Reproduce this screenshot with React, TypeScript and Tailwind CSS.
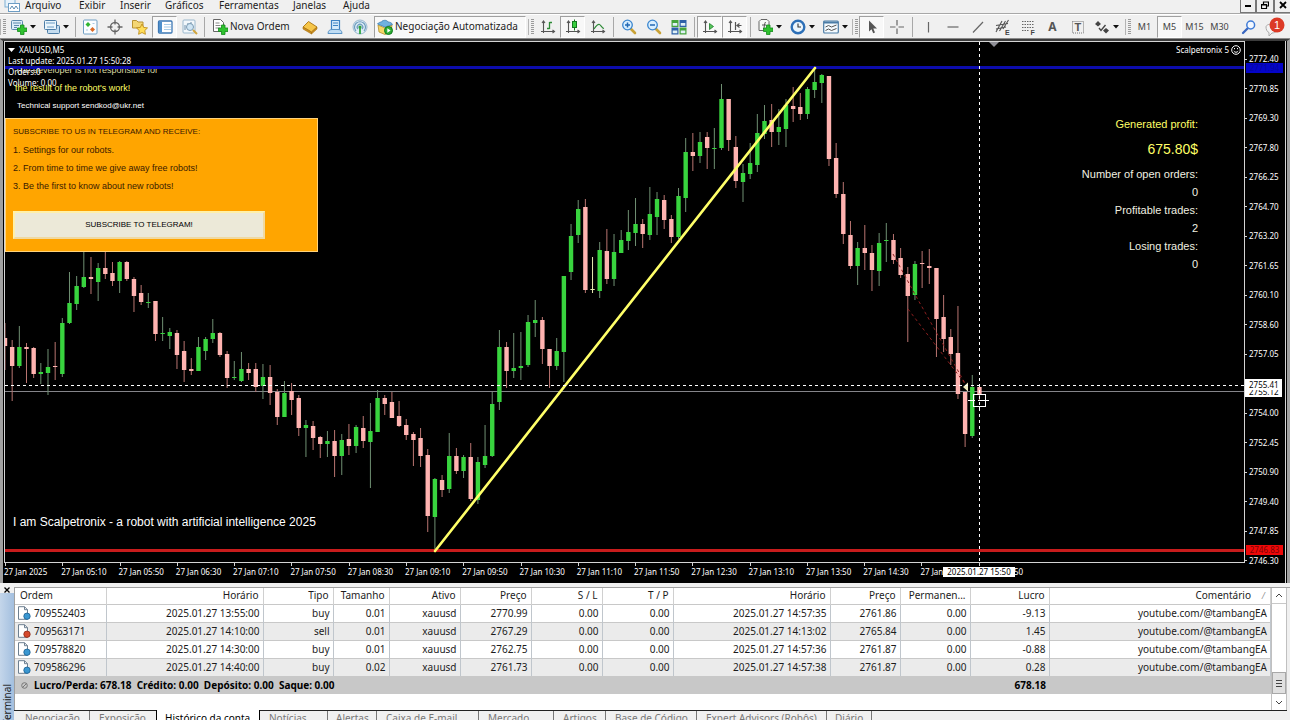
import type { ReactNode } from "react";

type Candle = [high: number, top: number, bottom: number, low: number, kind: string];

const STEP = 7.165;

const CANDLES: Candle[] = [
  [323, 338, 346, 370, "d"], [340, 347, 366, 401, "d"], [326, 347, 366, 368, "u"], [343, 347, 349, 383, "d"],
  [347, 348, 374, 378, "d"], [363, 372, 374, 384, "u"], [349, 367, 373, 395, "u"], [342, 366, 367, 380, "d"],
  [318, 323, 374, 377, "u"], [272, 303, 323, 324, "u"], [276, 286, 304, 310, "u"], [252, 277, 287, 288, "u"],
  [257, 277, 279, 294, "d"], [263, 268, 282, 301, "u"], [252, 268, 274, 279, "d"], [262, 273, 281, 286, "d"],
  [261, 262, 281, 293, "u"], [261, 262, 279, 281, "d"], [277, 279, 296, 312, "d"], [285, 293, 302, 305, "d"],
  [293, 302, 303, 308, "u"], [301, 301, 334, 341, "d"], [317, 333, 334, 341, "u"], [328, 332, 336, 349, "u"],
  [330, 333, 355, 369, "d"], [341, 351, 370, 382, "d"], [358, 369, 371, 375, "d"], [337, 347, 371, 371, "u"],
  [337, 339, 351, 360, "u"], [319, 333, 339, 343, "u"], [332, 333, 355, 357, "d"], [351, 354, 378, 388, "d"],
  [361, 377, 378, 380, "u"], [352, 369, 381, 382, "u"], [363, 369, 373, 380, "d"], [363, 369, 387, 392, "d"],
  [364, 377, 386, 399, "u"], [365, 377, 393, 405, "d"], [389, 392, 417, 425, "d"], [381, 393, 417, 417, "u"],
  [383, 391, 400, 415, "d"], [395, 398, 428, 436, "d"], [420, 425, 428, 457, "u"], [421, 426, 438, 450, "d"],
  [436, 437, 444, 458, "d"], [431, 441, 444, 457, "u"], [430, 441, 456, 477, "d"], [434, 440, 456, 475, "u"],
  [424, 439, 446, 455, "d"], [425, 427, 446, 453, "u"], [416, 428, 441, 448, "d"], [403, 431, 442, 488, "u"],
  [390, 398, 432, 432, "u"], [395, 398, 404, 415, "d"], [392, 402, 418, 418, "d"], [401, 416, 426, 427, "d"],
  [419, 425, 435, 440, "d"], [432, 434, 440, 466, "d"], [428, 438, 456, 467, "d"], [449, 455, 516, 532, "d"],
  [478, 479, 517, 550, "u"], [475, 480, 490, 497, "d"], [433, 456, 489, 493, "u"], [448, 456, 471, 474, "d"],
  [455, 457, 471, 478, "u"], [443, 457, 499, 501, "d"], [457, 462, 500, 504, "u"], [425, 456, 465, 468, "u"],
  [392, 404, 456, 457, "u"], [330, 347, 402, 410, "u"], [342, 347, 371, 388, "d"], [333, 368, 371, 378, "u"],
  [332, 366, 368, 380, "u"], [315, 322, 365, 367, "u"], [300, 320, 323, 337, "u"], [317, 320, 349, 364, "d"],
  [349, 349, 366, 388, "d"], [338, 351, 366, 370, "u"], [276, 276, 352, 382, "u"], [224, 236, 272, 280, "u"],
  [200, 209, 235, 243, "u"], [199, 207, 290, 293, "d"], [257, 289, 290, 293, "n"], [242, 250, 291, 298, "u"],
  [229, 251, 279, 284, "d"], [234, 252, 279, 286, "u"], [230, 240, 253, 253, "u"], [210, 232, 241, 250, "u"],
  [198, 224, 233, 246, "u"], [219, 224, 234, 248, "d"], [187, 214, 235, 240, "u"], [192, 199, 217, 235, "u"],
  [195, 200, 220, 229, "d"], [215, 219, 237, 243, "d"], [188, 196, 237, 239, "u"], [138, 152, 198, 212, "u"],
  [133, 152, 156, 171, "d"], [132, 142, 156, 163, "u"], [132, 137, 148, 169, "d"], [128, 148, 149, 169, "u"],
  [84, 99, 148, 150, "u"], [99, 99, 140, 151, "d"], [136, 147, 181, 188, "d"], [164, 173, 182, 202, "u"],
  [143, 163, 174, 179, "u"], [114, 133, 165, 172, "u"], [105, 121, 134, 139, "u"], [104, 120, 132, 147, "d"],
  [109, 127, 132, 145, "u"], [99, 105, 129, 147, "u"], [87, 106, 109, 122, "d"], [93, 107, 114, 120, "d"],
  [87, 89, 114, 119, "u"], [67, 82, 90, 98, "u"], [74, 75, 83, 103, "u"], [76, 76, 159, 166, "d"],
  [143, 158, 194, 198, "d"], [182, 194, 234, 244, "d"], [221, 235, 266, 269, "d"], [242, 248, 266, 285, "u"],
  [225, 248, 253, 270, "d"], [245, 253, 270, 291, "d"], [233, 243, 271, 286, "u"], [223, 240, 241, 262, "u"],
  [234, 240, 260, 264, "d"], [248, 258, 275, 278, "d"], [267, 274, 296, 342, "d"], [261, 264, 295, 300, "u"],
  [251, 263, 264, 288, "d"], [249, 266, 268, 284, "d"], [268, 268, 319, 357, "d"], [295, 317, 339, 352, "d"],
  [329, 337, 354, 365, "d"], [306, 353, 394, 399, "d"], [392, 392, 434, 447, "d"], [375, 387, 436, 438, "u"],
  [387, 387, 394, 400, "d"],
];

const BODY: Record<string, string> = { u: "#38d43e", d: "#ffb3b0", n: "#e8e8b0" };
const WICK: Record<string, string> = { u: "#6f8f72", d: "#b87470", n: "#e8e8b0" };

const PRICES = [
  "2772.40", "2770.85", "2769.30", "2767.80", "2766.25", "2764.70", "2763.20", "2761.65", "2760.10",
  "2758.60", "2757.05", "2755.50", "2754.00", "2752.45", "2750.90", "2749.40", "2747.85", "2746.30",
];

const TIMES = [
  "2025", "05:10", "05:50", "06:30", "07:10", "07:50", "08:30", "09:10", "09:50",
  "10:30", "11:10", "11:50", "12:30", "13:10", "13:50", "14:30", "15:10", "15:50",
];

const MENUS = [
  ["Arquivo", "w-[54px]"], ["Exibir", "w-[41px]"], ["Inserir", "w-[45px]"], ["Gráficos", "w-[54px]"],
  ["Ferramentas", "w-[74px]"], ["Janelas", "w-[50px]"], ["Ajuda", "w-[42px]"],
];

const ORDERS = [
  ["709552403", "2025.01.27 13:55:00", "buy", "0.01", "xauusd", "2770.99", "0.00", "0.00", "2025.01.27 14:57:35", "2761.86", "0.00", "-9.13", "youtube.com/@tambangEA"],
  ["709563171", "2025.01.27 14:10:00", "sell", "0.01", "xauusd", "2767.29", "0.00", "0.00", "2025.01.27 14:13:02", "2765.84", "0.00", "1.45", "youtube.com/@tambangEA"],
  ["709578820", "2025.01.27 14:30:00", "buy", "0.01", "xauusd", "2762.75", "0.00", "0.00", "2025.01.27 14:57:36", "2761.87", "0.00", "-0.88", "youtube.com/@tambangEA"],
  ["709586296", "2025.01.27 14:40:00", "buy", "0.02", "xauusd", "2761.73", "0.00", "0.00", "2025.01.27 14:57:38", "2761.87", "0.00", "0.28", "youtube.com/@tambangEA"],
];

const COLUMNS = [
  ["Ordem", "w-[91px]"], ["Horário", "w-[157px]"], ["Tipo", "w-[70px]"], ["Tamanho", "w-[56px]"],
  ["Ativo", "w-[71px]"], ["Preço", "w-[71px]"], ["S / L", "w-[71px]"], ["T / P", "w-[71px]"],
  ["Horário", "w-[157px]"], ["Preço", "w-[70px]"], ["Permanen...", "w-[70px]"], ["Lucro", "w-[79px]"],
  ["Comentário", ""],
];

const TABS = [
  ["Negociação", "w-[76px] pl-[11px]"], ["Exposição", "w-[66px] pl-[9px]"], ["Histórico da conta", "w-[104px] pl-[8px]"],
  ["Notícias", "w-[68px] pl-[9px]"], ["Alertas", "w-[49px] pl-[8px]"], ["Caixa de E-mail", "w-[102px] pl-[9px]"],
  ["Mercado", "w-[75px] pl-[9px]"], ["Artigos", "w-[52px] pl-[9px]"], ["Base de Código", "w-[91px] pl-[9px]"],
  ["Expert Advisors (Robôs)", "w-[130px] pl-[9px]"], ["Diário", "w-[45px] pl-[8px]"],
];

function Svg({ children }: { children: ReactNode }) {
  return (
    <svg viewBox="0 0 16 16" className="size-4 shrink-0" fill="none" aria-hidden="true">
      {children}
    </svg>
  );
}

const Plus = () => <path d="M9.500 6h3.500v3h3v3.500h-3v3H9.500v-3h-3V9h3z" fill="#2fc12f" stroke="#128a1b" strokeWidth=".8" />;
const Axes = () => <path d="M3.500 2v12M1 12.500h13.500M2 4l1.500-2L5 4M12.500 11l2 1.500-2 1.500" stroke="#555" strokeWidth="1.100" />;
const Lens = ({ sign }: { sign: string }) => (
  <Svg>
    <path d="M10 10l4 4" stroke="#c9a236" strokeWidth="2.600" strokeLinecap="round" />
    <circle cx="6.500" cy="6" r="4.800" fill="#d9efff" stroke="#3b86cf" strokeWidth="1.300" />
    <path d={sign} stroke="#2269b5" strokeWidth="1.500" />
  </Svg>
);

const icons = {
  app: (
    <Svg>
      <rect x="1" y="1" width="10" height="9" fill="#e6f2fb" stroke="#7fb0d4" />
      <rect x="4.500" y="6.500" width="11" height="8" fill="#fff" stroke="#6d9dc4" />
      <path d="M6 12l2-3 2 3 2-3 2 3" stroke="#5a8ab0" />
    </Svg>
  ),
  newChart: (
    <Svg>
      <rect x=".5" y="1.500" width="11" height="9" rx="1" fill="#dcedf9" stroke="#5a88ad" />
      <path d="M2 4h8M3 6.500h5M3 8.500h3" stroke="#5a88ad" />
      <Plus />
    </Svg>
  ),
  profiles: (
    <Svg>
      <rect x="3.500" y="6.500" width="12" height="8" rx="1" fill="#c4dcef" stroke="#4b7ca6" />
      <rect x=".5" y="1.500" width="12" height="9" rx="1" fill="#eaf5fc" stroke="#4b7ca6" />
      <path d="M2 4h9M3 8h7" stroke="#6b9cc4" />
    </Svg>
  ),
  market: (
    <Svg>
      <rect x="1.500" y="1" width="13.500" height="14" rx="1" fill="#fbfdff" stroke="#6f9fc4" />
      <path d="M6 3l2.500 2.500L6 8 3.500 5.500z" fill="#2fb52f" />
      <path d="M10.500 8l2.500 2.500-2.500 2.500L8 10.500z" fill="#dd6a26" />
      <path d="M10.500 4.500h2M4 11h2" stroke="#a9c9e0" />
    </Svg>
  ),
  target: (
    <Svg>
      <circle cx="8" cy="8" r="4.500" stroke="#666" strokeWidth="1.300" />
      <path d="M8 .5v5M8 10.500v5M.5 8h5M10.500 8h5" stroke="#666" strokeWidth="1.300" />
    </Svg>
  ),
  favorites: (
    <Svg>
      <path d="M.5 3V1.500h4L6 3h5v6H.5z" fill="#f4d774" stroke="#b99332" />
      <path d="M10 5l1.700 3.400 3.800.5-2.700 2.600.6 3.800-3.400-1.800-3.400 1.800.6-3.800-2.700-2.600 3.800-.5z" fill="#ffde59" stroke="#c08e1c" strokeWidth=".9" />
    </Svg>
  ),
  navigator: (
    <Svg>
      <rect x="1.500" y="2" width="13.500" height="12" rx="1" fill="#fff" stroke="#3d78b4" strokeWidth="1.300" />
      <path d="M2 2.500h3v11H2z" fill="#4f90cc" />
      <path d="M7 5.500h7M7 8h7M7 10.500h7" stroke="#a8cde8" />
    </Svg>
  ),
  tester: (
    <Svg>
      <rect x="1" y="1" width="12" height="13" rx="1" fill="#f2f7fb" stroke="#9bb8cd" />
      <path d="M3 11V6M6 9V4M9 8V3" stroke="#6c8ea9" />
      <circle cx="8" cy="8" r="3.500" fill="#cfe5f4" stroke="#7a9ab2" />
      <path d="M11 11l4 4" stroke="#d1a53e" strokeWidth="2" />
    </Svg>
  ),
  order: (
    <Svg>
      <path d="M1.500.5h7l3 3v9h-10z" fill="#fff" stroke="#666" />
      <path d="M3.500 4h4M3.500 6.500h5M3.500 9h4" stroke="#888" />
      <Plus />
    </Svg>
  ),
  gold: (
    <Svg>
      <path d="M1 8l5.500-5.500L15 8l-5.500 5z" fill="#f6c64a" stroke="#a97413" strokeWidth=".9" />
      <path d="M1 8l8.500 5v2L1 10zM9.500 13L15 8v2l-5.500 5z" fill="#c98c1d" stroke="#a97413" strokeWidth=".6" />
    </Svg>
  ),
  server: (
    <Svg>
      <path d="M4.500 1.500h8v9h-8z" fill="#d7ecfb" stroke="#3e83c4" strokeWidth="1.200" />
      <path d="M6 4h5M6 6.500h5" stroke="#3e83c4" />
      <path d="M1 14.500c0-3 2-4 4-4h6c2 0 4 1 4 4z" fill="#bfdcf3" stroke="#5b94c6" />
    </Svg>
  ),
  signal: (
    <Svg>
      <circle cx="8" cy="8" r="7" fill="#e1edf6" stroke="#9ab9d0" />
      <path d="M4 12a5.500 5.500 0 118 0M6 10a2.800 2.800 0 114 0" stroke="#6b9cbd" strokeWidth="1.200" />
      <circle cx="8" cy="8" r="1.600" fill="#2f9f3f" />
      <path d="M8 9v6" stroke="#2fa53f" strokeWidth="1.800" />
    </Svg>
  ),
  auto: (
    <Svg>
      <path d="M1 6l7 3 7-3-1 7-6 2.500L2 13z" fill="#f6d767" stroke="#b28f2c" strokeWidth=".8" />
      <path d="M.5 5c1-1.500 3-2 4-2C5 1 10 .5 11 3c2 0 4 1 4.500 2.500L8 8z" fill="#6fb1df" stroke="#3d7db0" strokeWidth=".8" />
      <circle cx="11.500" cy="11.500" r="4" fill="#2faf35" stroke="#11791d" />
      <path d="M10.300 9.300v4.400l3.300-2.200z" fill="#fff" />
    </Svg>
  ),
  bars: (
    <Svg>
      <Axes />
      <path d="M9.500 3v7M7 9.500h2.500M9.500 3.500H12" stroke="#2c8a35" strokeWidth="1.300" />
    </Svg>
  ),
  candles: (
    <Svg>
      <Axes />
      <path d="M9.500.5v11" stroke="#147a1f" />
      <rect x="7.500" y="2.500" width="4" height="6" fill="#39cf3f" stroke="#147a1f" />
    </Svg>
  ),
  line: (
    <Svg>
      <Axes />
      <path d="M4 10c2-3 4-5 5.500-4.500S12 9 14 9.500" stroke="#2c8a35" strokeWidth="1.200" />
    </Svg>
  ),
  tile: (
    <Svg>
      <path d="M.5 1h7v7h-7zM8.500 8.500h7v7h-7z" fill="#45a43c" />
      <path d="M8.500 1h7v7h-7zM.5 8.500h7v7h-7z" fill="#2f62a8" />
      <path d="M1.700 4h4.600v2.800H1.700zM9.700 4h4.600v2.800H9.700zM1.700 11.500h4.600v2.800H1.700zM9.700 11.500h4.600v2.800H9.700z" fill="#dff0f6" />
    </Svg>
  ),
  scroll: (
    <Svg>
      <Axes />
      <path d="M7.500 4.500l4 3-4 3z" fill="#56c45a" stroke="#1d7f2b" strokeWidth=".8" />
    </Svg>
  ),
  shift: (
    <Svg>
      <Axes />
      <path d="M8.500 3v8M14.500 6.500h-4M12.500 4.500l-2.500 2 2.500 2" stroke="#555" strokeWidth="1.200" />
    </Svg>
  ),
  indicators: (
    <Svg>
      <path d="M4 .5h6l2 2v9H2v-9z" fill="#f7faf7" stroke="#666" />
      <path d="M6.500 10c1-1 .5-5 2-7M5 6h4" stroke="#555" />
      <Plus />
    </Svg>
  ),
  clock: (
    <Svg>
      <circle cx="8" cy="8" r="6.300" fill="#eaf5fd" stroke="#2c6fb7" strokeWidth="2.400" />
      <path d="M8 4.500V8h3" stroke="#333" strokeWidth="1.100" />
    </Svg>
  ),
  template: (
    <Svg>
      <rect x=".7" y="2" width="14.600" height="12" rx="1" fill="#f4fafe" stroke="#4b7ca6" strokeWidth="1.200" />
      <path d="M1 3.500h14" stroke="#4b7ca6" strokeWidth="2" />
      <path d="M2.500 8l3-1.500 3 1.500 5-2M2.500 11.500l3-1.500 3 1.500 5-2" stroke="#555" />
    </Svg>
  ),
  cursor: (
    <Svg>
      <path d="M5 1.500v11l2.500-2.300 1.700 4 1.800-.8-1.700-3.900H13z" fill="#555" />
    </Svg>
  ),
  cross: (
    <Svg>
      <path d="M8 1v5.500M8 9.500V15M1 8h5.500M9.500 8H15" stroke="#666" strokeWidth="1.200" />
    </Svg>
  ),
  vline: <Svg><path d="M8.500 3v10.500" stroke="#666" strokeWidth="1.200" /></Svg>,
  hline: <Svg><path d="M2.500 8h11" stroke="#666" strokeWidth="1.200" /></Svg>,
  trend: <Svg><path d="M3 13.500L13 3" stroke="#666" strokeWidth="1.200" /></Svg>,
  channel: (
    <svg viewBox="0 0 16 16" className="size-4 shrink-0" fill="none" aria-hidden="true">
      <path d="M1 13L7 2M4.500 12l6-10M8 10l5.500-9M1 6.500l12-2M1 10l10-2" stroke="#555" strokeWidth="1.100" />
      <text x="10" y="16" fontSize="7" fontWeight="bold" fontFamily="Liberation Sans, sans-serif" fill="#444">E</text>
    </svg>
  ),
  fibo: (
    <svg viewBox="0 0 16 16" className="size-4 shrink-0" fill="none" aria-hidden="true">
      <path d="M2 2.500h12M2 5.500h12M2 8.500h12M2 11.500h7" stroke="#666" strokeDasharray="1.500 1" />
      <text x="10.500" y="16" fontSize="7" fontWeight="bold" fontFamily="Liberation Sans, sans-serif" fill="#444">F</text>
    </svg>
  ),
  label: (
    <svg viewBox="0 0 16 16" className="size-4 shrink-0" fill="none" aria-hidden="true">
      <rect x="2.500" y="2.500" width="11" height="11.500" stroke="#777" strokeDasharray="1 1" />
      <text x="4.500" y="12" fontSize="11" fontWeight="bold" fontFamily="Liberation Sans, sans-serif" fill="#555">T</text>
    </svg>
  ),
  arrows: (
    <Svg>
      <path d="M1 5l3-3 3 3-3 2.500zM9 11.500L12 9l3 2.500-3 3z" fill="#444" />
      <path d="M5 9l2 2.500L11.500 6" stroke="#444" strokeWidth="1.400" />
    </Svg>
  ),
  search: (
    <Svg>
      <path d="M2 14l5-5" stroke="#3a67c0" strokeWidth="2.300" strokeLinecap="round" />
      <circle cx="9.700" cy="6" r="3.900" fill="#f3f8ff" stroke="#3f7bd6" strokeWidth="1.500" />
    </Svg>
  ),
};

function Tool({ name, children, pressed }: { name: string; children: ReactNode; pressed?: boolean }) {
  return (
    <button
      type="button"
      aria-label={name}
      aria-pressed={pressed}
      className={
        pressed
          ? "flex h-[22px] w-[25px] shrink-0 items-center justify-center border border-[#a0a0a0] border-r-white border-b-white bg-[#f8f8f8]"
          : "flex h-[22px] w-[25px] shrink-0 items-center justify-center"
      }
    >
      {children}
    </button>
  );
}

function Split({ name, children }: { name: string; children: ReactNode }) {
  return (
    <button type="button" aria-label={name} className="flex h-[22px] w-[33px] shrink-0 items-center gap-[3px] pl-[4px]">
      {children}
      <svg viewBox="0 0 6 4" className="h-1 w-1.5" aria-hidden="true">
        <path d="M0 0h6L3 3.500z" fill="#111" />
      </svg>
    </button>
  );
}

const Sep = ({ wide }: { wide?: boolean }) => (
  <div className={wide ? "flex w-1.5 shrink-0 justify-center" : "flex w-1 shrink-0 justify-center"}>
    <div className="h-5 w-px bg-[#a8a8a8]" />
  </div>
);

const Grip = () => (
  <div className="flex w-[7px] shrink-0 justify-center border-l border-[#b4b4b4]">
    <div className="h-4 w-[3px] bg-[repeating-linear-gradient(#9a9a9a_0_1px,#f0f0f0_1px_2px)]" />
  </div>
);

function DocIcon({ sell }: { sell: boolean }) {
  return (
    <svg viewBox="0 0 14 14" className="size-3.5 shrink-0" fill="none" aria-hidden="true">
      <path d="M1.500.7h6l3 3v9.600h-9z" fill="#fff" stroke="#6d7f90" />
      <path d="M7.500.7v3h3" stroke="#6d7f90" />
      <circle cx="10" cy="10.200" r="3.200" fill={sell ? "#d6492c" : "#3a97d1"} stroke={sell ? "#8d2a16" : "#1d5f90"} strokeWidth=".8" />
    </svg>
  );
}

function MenuBar() {
  return (
    <header className="flex h-[14px] shrink-0 items-end overflow-hidden border-b border-[#a8a8a8] bg-[#f0f0f0]">
      <div className="flex h-4 w-[25px] shrink-0 items-center pl-1">{icons.app}</div>
      <nav className="flex">
        {MENUS.map(([label, width]) => (
          <button key={label} type="button" className={`${width} h-[15px] shrink-0 text-left text-[10px] leading-[15px]`}>
            {label}
          </button>
        ))}
      </nav>
      <div className="ml-auto flex h-4">
        <button type="button" aria-label="Minimizar" className="flex w-4 items-end justify-center border border-[#777] pb-[5px]">
          <span className="h-0.5 w-1.5 bg-black" />
        </button>
        <button type="button" aria-label="Restaurar" className="flex w-[18px] items-center justify-center border border-[#777]">
          <svg viewBox="0 0 8 8" className="size-2" fill="none" aria-hidden="true">
            <path d="M2.500 3V1h5v4H6M.5 3.500h5v4h-5zM.5 4h5" stroke="#000" strokeWidth="1.200" />
          </svg>
        </button>
        <button type="button" aria-label="Fechar" className="flex w-4 items-center justify-center border border-r-0 border-[#777]">
          <svg viewBox="0 0 8 8" className="size-2" aria-hidden="true">
            <path d="M1 1l6 6M7 1L1 7" stroke="#000" strokeWidth="1.800" />
          </svg>
        </button>
      </div>
    </header>
  );
}

function Toolbar() {
  return (
    <div role="toolbar" aria-label="Ferramentas" className="flex h-[25px] shrink-0 items-center overflow-hidden border-t border-b border-t-white border-b-[#8a8a8a] bg-[#f0f0f0]">
      <Grip />
      <Split name="Novo gráfico">{icons.newChart}</Split>
      <Split name="Perfis">{icons.profiles}</Split>
      <Sep />
      <Tool name="Observação do mercado">{icons.market}</Tool>
      <Tool name="Janela de dados">{icons.target}</Tool>
      <Tool name="Favoritos">{icons.favorites}</Tool>
      <Tool name="Navegador" pressed>{icons.navigator}</Tool>
      <Tool name="Testador">{icons.tester}</Tool>
      <Sep />
      <button type="button" className="flex h-[22px] w-[91px] shrink-0 items-center gap-0.5 pl-1.5 text-[10px] whitespace-nowrap">
        {icons.order}
        Nova Ordem
      </button>
      <Tool name="MetaEditor">{icons.gold}</Tool>
      <Tool name="Hospedagem">{icons.server}</Tool>
      <Tool name="Sinais">{icons.signal}</Tool>
      <button
        type="button"
        aria-pressed="true"
        className="ml-0.5 flex h-[22px] w-[152px] shrink-0 items-center gap-0.5 border border-[#a0a0a0] border-r-white border-b-white bg-[#f8f8f8] pl-0.5 text-[10px] whitespace-nowrap"
      >
        {icons.auto}
        Negociação Automatizada
      </button>
      <div className="w-0.5 shrink-0" />
      <Grip />
      <Tool name="Barras">{icons.bars}</Tool>
      <Tool name="Velas" pressed>{icons.candles}</Tool>
      <Tool name="Linha">{icons.line}</Tool>
      <Sep wide />
      <Tool name="Ampliar"><Lens sign="M4 6h5M6.500 3.500v5" /></Tool>
      <Tool name="Reduzir"><Lens sign="M4 6h5" /></Tool>
      <Tool name="Lado a lado">{icons.tile}</Tool>
      <Sep wide />
      <Tool name="Rolagem automática" pressed>{icons.scroll}</Tool>
      <Tool name="Deslocar gráfico" pressed>{icons.shift}</Tool>
      <Sep wide />
      <Split name="Indicadores">{icons.indicators}</Split>
      <Split name="Períodos">{icons.clock}</Split>
      <Split name="Modelos">{icons.template}</Split>
      <Grip />
      <Tool name="Cursor" pressed>{icons.cursor}</Tool>
      <Tool name="Mira">{icons.cross}</Tool>
      <Sep wide />
      <Tool name="Linha vertical">{icons.vline}</Tool>
      <Tool name="Linha horizontal">{icons.hline}</Tool>
      <Tool name="Linha de tendência">{icons.trend}</Tool>
      <Tool name="Canal">{icons.channel}</Tool>
      <Tool name="Fibonacci">{icons.fibo}</Tool>
      <Tool name="Texto"><span className="text-xs font-bold text-[#555]">A</span></Tool>
      <Tool name="Etiqueta">{icons.label}</Tool>
      <Split name="Setas">{icons.arrows}</Split>
      <div className="w-0.5 shrink-0" />
      <Grip />
      <Tool name="M1"><span className="text-[9px] text-[#444]">M1</span></Tool>
      <Tool name="M5" pressed><span className="text-[9px] text-[#444]">M5</span></Tool>
      <Tool name="M15"><span className="text-[9px] text-[#444]">M15</span></Tool>
      <Tool name="M30"><span className="text-[9px] text-[#444]">M30</span></Tool>
      <div className="w-1 shrink-0" />
      <Tool name="Pesquisar">{icons.search}</Tool>
      <button type="button" aria-label="Notificações" className="ml-0.5 flex h-[22px] w-[22px] shrink-0 items-center">
        <svg viewBox="0 0 22 20" className="h-5 w-[22px]" fill="none" aria-hidden="true">
          <path d="M3 10c0-2 3-3 6-3s6 2 6 4-2 5-6 5l-3 3v-3.500C4 15 3 12 3 10z" fill="#f4f4f4" stroke="#aaa" />
          <circle cx="14" cy="8" r="7.500" fill="#dc3a26" />
          <text x="11" y="12" fontSize="11" fontFamily="Liberation Sans, sans-serif" fill="#fff">1</text>
        </svg>
      </button>
    </div>
  );
}

function Plot() {
  return (
    <svg className="absolute inset-0 size-full" aria-label="XAUUSD M5" role="img">
      <g transform="translate(-5 -42)">
        <path d="M989 42h10l-5 5z" fill="#8f8f96" />
        <rect x="5" y="391" width="100%" height="1" fill="#85858a" />
        {CANDLES.map(([high, top, bottom, low, kind], i) => {
          const x = 5 + i * STEP;
          return (
            <g key={i}>
              <rect x={x - 0.5} y={high} width="1" height={low - high} fill={WICK[kind]} />
              <rect x={x - 2.2} y={top} width="4.400" height={Math.max(bottom - top, 1)} fill={BODY[kind]} />
            </g>
          );
        })}
        <g stroke="#8c1f1f" strokeWidth="1" strokeDasharray="3 3" fill="none">
          <path d="M893 254L917 298L966 385" />
          <path d="M908 309L966 385" />
        </g>
        <rect x="5" y="66" width="100%" height="3" fill="#0c0cac" />
        <rect x="5" y="549" width="100%" height="3" fill="#c81c1c" />
        <path d="M435 551L815 68" stroke="#ffff68" strokeWidth="2.600" strokeLinecap="round" />
        <path d="M963 387l5-4.500v9z" fill="#f2ecc0" />
        <path d="M5 385.500H1400" stroke="#fff" strokeDasharray="3 3" />
        <path d="M979.500 42V563" stroke="#fff" strokeDasharray="3 3" />
        <rect x="973.500" y="394.500" width="12" height="12" stroke="#fff" fill="none" />
        <path d="M968 400.500h7M978 400.500h11M979.500 406v4" stroke="#fff" />
      </g>
    </svg>
  );
}

function Promo() {
  return (
    <aside className="absolute top-[76px] left-0 h-[134px] w-[313px] border border-[#ffd27a] bg-[#ffa500] pt-1 pl-[7px] font-['Liberation_Sans',Arial,sans-serif] text-[8px] leading-[18px] text-[#3a1a00]">
      <p>SUBSCRIBE TO US IN TELEGRAM AND RECEIVE:</p>
      <ol className="text-[9px]">
        <li>1. Settings for our robots.</li>
        <li>2. From time to time we give away free robots!</li>
        <li>3. Be the first to know about new robots!</li>
      </ol>
      <button type="button" className="mt-4 h-[28px] w-[252px] border-2 border-[#fff0a8] border-r-[#f0d9a0] border-b-[#f0d9a0] bg-[#ece9d8] leading-[22px] text-black">
        SUBSCRIBE TO TELEGRAM!
      </button>
    </aside>
  );
}

function Stats() {
  return (
    <div className="absolute top-[73px] right-[46px] text-right font-['Liberation_Sans',Arial,sans-serif] text-[11px] leading-[18px] text-[#f0f0e0]">
      <p className="text-[#ffff66]">Generated profit:</p>
      <p className="py-1 text-sm leading-6 text-[#ffff66]">675.80$</p>
      <p>Number of open orders:</p>
      <p>0</p>
      <p>Profitable trades:</p>
      <p>2</p>
      <p>Losing trades:</p>
      <p>0</p>
    </div>
  );
}

function Chart() {
  return (
    <main className="flex min-h-0 flex-1 border-t-2 border-l-[3px] border-r-[3px] border-[#a0a0a0] border-t-[#3c3c3c] bg-black text-[8px] text-white">
      <div className="ml-px flex min-w-0 flex-1 flex-col">
        <div className="relative min-h-0 flex-1 overflow-hidden border border-[#d4d4d4]">
          <Plot />
          <div className="absolute top-[27px] left-[10px] h-[7px] overflow-hidden">
            <p className="-mt-1 font-['Liberation_Sans',Arial,sans-serif] text-[9px] leading-[10px] text-[#d8d8a0]">The developer is not responsible for</p>
          </div>
          <div className="absolute top-[2px] left-[3px] leading-[11px]">
            <p className="flex items-center gap-1">
              <svg viewBox="0 0 7 4" className="h-1 w-[7px]" aria-hidden="true"><path d="M0 0h7L3.500 4z" fill="#fff" /></svg>
              XAUUSD,M5
            </p>
            <p>Last update: 2025.01.27 15:50:28</p>
            <p>Orders:0</p>
            <p>Volume: 0.00</p>
          </div>
          <div className="absolute top-[37px] left-[10px] font-['Liberation_Sans',Arial,sans-serif] text-[9px] leading-[18px]">
            <p className="text-[#ffff66]">the result of the robot's work!</p>
            <p className="pl-0.5 text-[8px]">Technical support sendkod@ukr.net</p>
          </div>
          <Promo />
          <Stats />
          <p className="absolute top-[2px] right-[3px] flex items-center gap-0.5 leading-[12px]">
            Scalpetronix 5
            <svg viewBox="0 0 10 10" className="size-2.5" fill="none" stroke="#fff" aria-hidden="true">
              <circle cx="5" cy="5" r="4.300" />
              <path d="M3.500 3v1.200M6.500 3v1.200M2.800 6c1 1.700 3.400 1.700 4.400 0" />
            </svg>
          </p>
          <p className="absolute bottom-[32px] left-[8px] font-['Liberation_Sans',Arial,sans-serif] text-xs leading-4">
            I am Scalpetronix - a robot with artificial intelligence 2025
          </p>
        </div>
        <div className="relative h-[20px] shrink-0">
          <ol className="grid w-[1031px] grid-cols-[repeat(18,1fr)]">
            {TIMES.map((time) => (
              <li key={time} className="whitespace-nowrap">
                <span className="ml-px block h-[3px] w-px bg-[#d4d4d4]" />
                <span className="block leading-[12px]">27 Jan {time}</span>
              </li>
            ))}
          </ol>
          <p className="absolute top-1 left-[939px] w-[72px] bg-white text-center leading-[10px] text-black">2025.01.27 15:50</p>
        </div>
      </div>
      <div className="relative mr-px w-[41px] shrink-0 border-r border-[#d4d4d4]">
        <ol className="flex h-[526px] flex-col justify-between pt-[12px] leading-[12px]">
          {PRICES.map((price) => (
            <li key={price} className="flex items-center gap-0.5">
              <span className="h-px w-[2px] bg-[#d4d4d4]" />
              {price}
            </li>
          ))}
        </ol>
        <p className="absolute top-[22px] left-px h-[10px] w-[37px] bg-[#0404c8] text-center leading-[10px] text-[#0404a0]">2771.94</p>
        <p className="absolute top-[504px] left-px h-[10px] w-[37px] bg-[#ee0808] text-center leading-[10px] text-[#7a0404]">2746.83</p>
        <p className="absolute top-[346px] left-0 h-[10px] w-[37px] bg-white pl-1 leading-[10px] text-black">2755.12</p>
        <p className="absolute top-[338px] left-0 h-[11px] w-[37px] bg-white pl-1 leading-[11px] text-black">2755.41</p>
      </div>
    </main>
  );
}

function Terminal() {
  return (
    <section className="flex h-[137px] shrink-0 overflow-hidden border-t-4 border-[#f0f0f0] bg-[#f0f0f0] text-[10px]">
      <div className="flex w-[14px] shrink-0 flex-col items-center">
        <button type="button" aria-label="Fechar terminal" className="flex h-3 w-full items-center justify-center">
          <svg viewBox="0 0 6 6" className="size-1.5" aria-hidden="true"><path d="M.5.5l5 5M5.500.5l-5 5" stroke="#000" strokeWidth="1.300" /></svg>
        </button>
        <div className="flex w-full flex-1 items-start justify-center bg-[linear-gradient(90deg,#c4d6ea,#a3bfdf)] pt-[91px]">
          <span className="rotate-180 leading-[12px] [writing-mode:vertical-rl]">Terminal</span>
        </div>
      </div>
      <div className="flex min-w-0 flex-1 flex-col">
        <div className="flex h-[123px] shrink-0 border-t border-[#a0a0a0] bg-white">
          <div className="min-w-0 flex-1 border-l border-[#a0a0a0]">
            <table className="w-full table-fixed border-collapse text-right whitespace-nowrap text-[#1c1c1c]">
              <thead>
                <tr className="h-4 border-b border-[#c8c8c8]">
                  {COLUMNS.map(([label, width], i) => (
                    <th key={i} scope="col" className={`${width} border-r border-[#d0d0d0] p-0 pr-1 leading-[15px] font-normal first:pl-[5px] first:text-left last:pr-1.5`}>
                      {label}
                      {i === 12 && <span className="ml-3 text-[8px] leading-none text-[#777]">⁄</span>}
                    </th>
                  ))}
                </tr>
              </thead>
              <tbody>
                {ORDERS.map((row) => (
                  <tr key={row[0]} className="h-[18px] border-b border-[#c8c8c8] last:border-b-0 even:bg-[#ebebeb]">
                    {row.map((cell, i) => (
                      <td key={i} className="border-r border-[#c0c6cc] p-0 pr-[3px] leading-[17px]">
                        {i === 0 ? (
                          <span className="flex items-center gap-[3px] pl-0.5">
                            <DocIcon sell={row[2] === "sell"} />
                            {cell}
                          </span>
                        ) : (
                          cell
                        )}
                      </td>
                    ))}
                  </tr>
                ))}
              </tbody>
              <tfoot>
                <tr className="h-[18px] bg-[#c8c8c8] font-bold text-black">
                  <td colSpan={11} className="p-0">
                    <span className="flex items-center gap-1.5 pl-1.5 text-left leading-[18px]">
                      <svg viewBox="0 0 7 7" className="size-[7px]" fill="none" stroke="#777" aria-hidden="true"><circle cx="3.500" cy="3.500" r="2.800" /><path d="M1.500 5.500l4-4" /></svg>
                      <span className="whitespace-pre">Lucro/Perda: 678.18  Crédito: 0.00  Depósito: 0.00  Saque: 0.00</span>
                    </span>
                  </td>
                  <td className="p-0 pr-[3px] leading-[18px]">678.18</td>
                  <td />
                </tr>
              </tfoot>
            </table>
          </div>
          <div className="flex w-4 shrink-0 flex-col border-x border-[#c0c0c0] bg-white">
            <button type="button" aria-label="Rolar para cima" className="flex h-4 items-center justify-center border-b border-[#c8c8c8]">
              <svg viewBox="0 0 8 5" className="h-[5px] w-2" fill="none" aria-hidden="true"><path d="M1 4l3-3 3 3" stroke="#444" /></svg>
            </button>
            <div className="mt-auto flex h-[22px] flex-col items-center justify-center gap-0.5 border border-[#a8a8a8] bg-[#e0e0e0]">
              <span className="h-px w-1.5 bg-[#444]" />
              <span className="h-px w-1.5 bg-[#444]" />
              <span className="h-px w-1.5 bg-[#444]" />
            </div>
            <button type="button" aria-label="Rolar para baixo" className="flex h-4 items-center justify-center">
              <svg viewBox="0 0 8 5" className="h-[5px] w-2" fill="none" aria-hidden="true"><path d="M1 1l3 3 3-3" stroke="#444" /></svg>
            </button>
          </div>
          <div className="w-[3px] shrink-0 bg-[#f0f0f0]" />
        </div>
        <div role="tablist" className="flex h-5 shrink-0 leading-[14px] whitespace-nowrap">
          {TABS.map(([label, width], i) => (
            <button
              key={label}
              type="button"
              role="tab"
              aria-selected={i === 2}
              className={
                i === 2
                  ? `${width} flex h-5 shrink-0 items-start border-r border-l border-black bg-white pt-px text-left text-black`
                  : `${width} flex h-5 shrink-0 items-start border-t border-[#222] text-left text-[#777]`
              }
            >
              <span className={i === 1 || i === 2 ? "flex-1" : "flex-1 border-r border-[#777]"}>{label}</span>
            </button>
          ))}
          <div className="mr-[3px] flex-1 border-t border-[#222]" />
        </div>
      </div>
    </section>
  );
}

export default function App() {
  return (
    <div className="flex h-screen flex-col overflow-hidden bg-[#f0f0f0] font-['Noto_Sans','Open_Sans',sans-serif] text-[#1c1c1c]">
      <MenuBar />
      <Toolbar />
      <Chart />
      <Terminal />
    </div>
  );
}
